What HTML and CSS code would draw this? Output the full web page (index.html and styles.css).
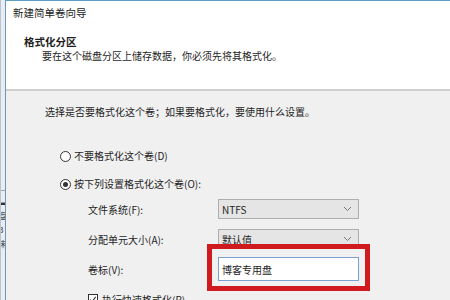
FILE: index.html
```html
<!DOCTYPE html>
<html lang="zh-CN">
<head>
  <meta charset="UTF-8" />
  <title>新建简单卷向导</title>
  <link rel="stylesheet" href="styles.css">
</head>
<body>
  <div class="screen">
    <div class="side-strip">
      <div class="strip-top"></div>
      <div class="strip-chars">
        <span>▬</span>
        <span>盘</span>
        <span>3</span>
        <span>未</span>
      </div>
    </div>

    <div class="wizard">
      <div class="wizard-header">
        <div class="window-title">新建简单卷向导</div>
        <div class="page-title">格式化分区</div>
        <div class="page-desc">要在这个磁盘分区上储存数据，你必须先将其格式化。</div>
      </div>

      <div class="wizard-body">
        <p class="intro">选择是否要格式化这个卷；如果要格式化，要使用什么设置。</p>

        <label class="radio-row">
          <span class="radio"></span>
          不要格式化这个卷(D)
        </label>
        <label class="radio-row">
          <span class="radio checked"></span>
          按下列设置格式化这个卷(O):
        </label>

        <div class="settings">
          <div class="field-row">
            <span class="field-label">文件系统(F):</span>
            <div class="select">
              <span>NTFS</span>
              <svg class="chevron" width="9" height="6" viewBox="0 0 9 6"><polyline points="1,1 4.5,4.5 8,1" fill="none" stroke="#777" stroke-width="1"/></svg>
            </div>
          </div>
          <div class="field-row">
            <span class="field-label">分配单元大小(A):</span>
            <div class="select">
              <span>默认值</span>
              <svg class="chevron" width="9" height="6" viewBox="0 0 9 6"><polyline points="1,1 4.5,4.5 8,1" fill="none" stroke="#777" stroke-width="1"/></svg>
            </div>
          </div>
          <div class="field-row">
            <span class="field-label">卷标(V):</span>
            <div class="input-wrap">
              <div class="text-input">博客专用盘</div>
              <div class="highlight-box"></div>
            </div>
          </div>
          <div class="field-row">
            <label class="check-row">
              <span class="checkbox">
                <svg width="9" height="9" viewBox="0 0 9 9"><polyline points="1.5,4.5 3.5,7 7.5,1.5" fill="none" stroke="#333" stroke-width="1.2"/></svg>
              </span>
              执行快速格式化(P)
            </label>
          </div>
        </div>
      </div>
    </div>
  </div>
</body>
</html>
```

FILE: styles.css
```css
html, body {
  margin: 0;
  padding: 0;
}
body {
  font-family: "Noto Sans CJK SC", "Microsoft YaHei", sans-serif;
  font-size: 10px;
  color: #1e1e1e;
  background: #f0f0f0;
}
.screen {
  display: flex;
  width: 450px;
  height: 300px;
  overflow: hidden;
}
.side-strip {
  width: 6px;
  flex-shrink: 0;
  background: #e9edf1;
  border-left: 1px solid #b9c4cf;
  border-right: 1px solid #6d94bd;
  box-sizing: border-box;
  display: flex;
  flex-direction: column;
  overflow: hidden;
}
.strip-top {
  height: 190px;
  flex-shrink: 0;
  border-bottom: 1px solid #9aa6b2;
}
.strip-chars {
  display: flex;
  flex-direction: column;
  gap: 5px;
  padding-top: 6px;
  margin-left: -2px;
  font-size: 8px;
  line-height: 9px;
  color: #333;
}
.wizard {
  flex: 1;
  display: flex;
  flex-direction: column;
  border-top: 1px solid #5f9cc0;
}
.wizard-header {
  flex-shrink: 0;
  background: #fff;
  height: 88px;
  border-bottom: 2px solid #cfcfcf;
  padding-left: 7px;
}
.window-title {
  line-height: 14px;
  margin-top: 5px;
  font-size: 10.5px;
}
.page-title {
  font-weight: bold;
  font-size: 10.5px;
  line-height: 14px;
  margin-top: 15px;
  margin-left: 11px;
}
.page-desc {
  line-height: 14px;
  margin-left: 29px;
}
.wizard-body {
  flex-shrink: 0;
  padding-left: 32px;
}
.intro {
  margin: 14px 0 0 7px;
  line-height: 14px;
}
.radio-row {
  display: flex;
  align-items: center;
  gap: 3px;
  line-height: 14px;
  margin-left: 22px;
  margin-top: 14px;
}
.intro + .radio-row {
  margin-top: 30px;
}
.radio {
  width: 9px;
  height: 9px;
  border: 1px solid #333;
  border-radius: 50%;
  background: #fff;
  display: flex;
  align-items: center;
  justify-content: center;
}
.radio.checked::after {
  content: "";
  width: 5px;
  height: 5px;
  border-radius: 50%;
  background: #333;
}
.settings {
  margin-top: 3px;
  margin-left: 50px;
}
.field-row {
  display: flex;
  align-items: center;
  height: 30px;
}
.field-label {
  width: 130px;
  flex-shrink: 0;
}
.select {
  width: 141px;
  height: 20px;
  box-sizing: border-box;
  background: #e5e5e5;
  border: 1px solid #adadad;
  display: flex;
  align-items: center;
  justify-content: space-between;
  padding: 0 6px 0 3px;
}
.input-wrap {
  position: relative;
  display: flex;
}
.text-input {
  width: 141px;
  height: 24px;
  box-sizing: border-box;
  background: #fff;
  border: 1px solid #7a9fd0;
  display: flex;
  align-items: center;
  padding-left: 3px;
}
.highlight-box {
  position: absolute;
  left: -11px;
  top: -13px;
  right: -11px;
  bottom: -10px;
  border: 5px solid #cf1a1f;
}
.check-row {
  display: flex;
  align-items: center;
  gap: 4px;
}
.checkbox {
  width: 10px;
  height: 10px;
  box-sizing: border-box;
  border: 1px solid #333;
  background: #fff;
  display: flex;
  align-items: center;
  justify-content: center;
}
```
